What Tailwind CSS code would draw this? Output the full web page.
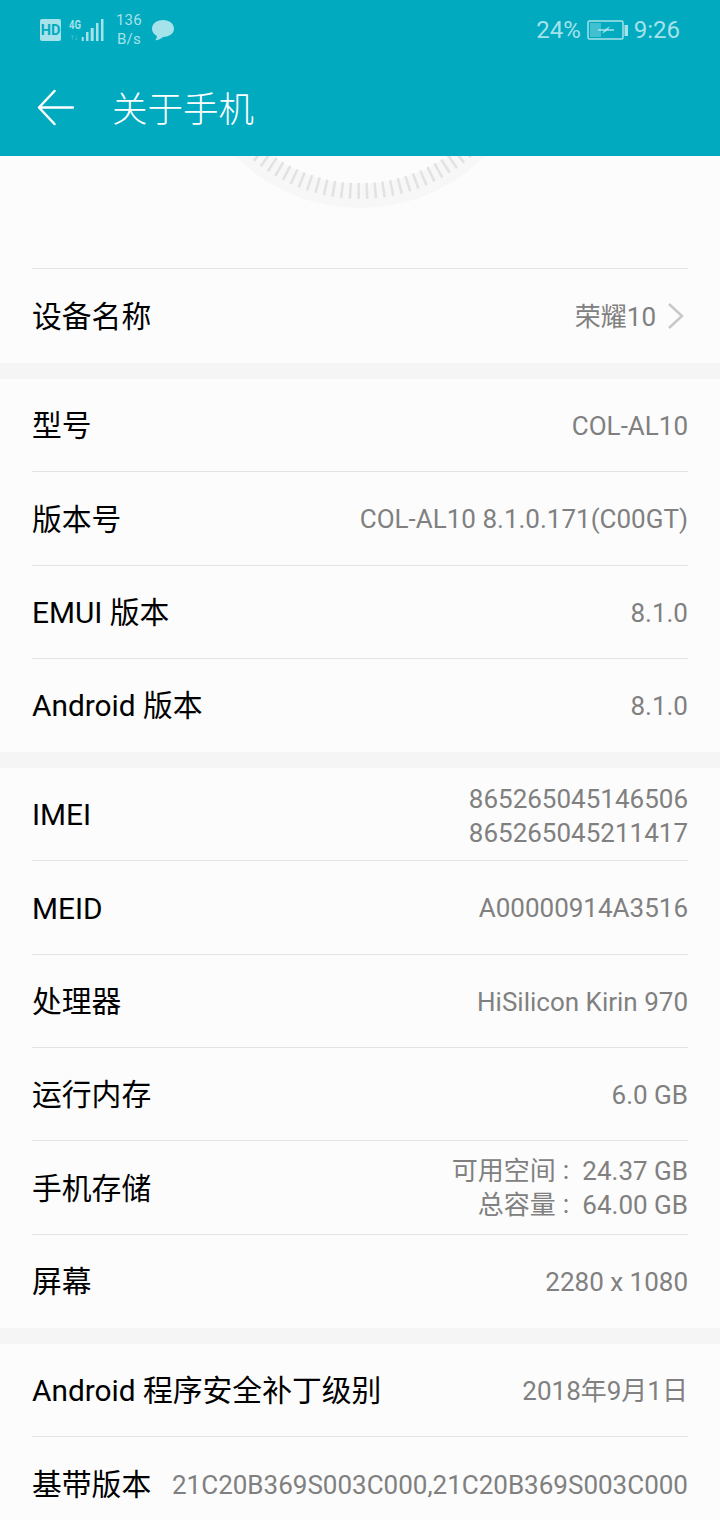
<!DOCTYPE html>
<html>
<head>
<meta charset="utf-8">
<script src="https://cdn.jsdelivr.net/npm/@tailwindcss/browser@4"></script>
</head>
<body class="bg-[#fcfcfc] font-['Roboto','Noto_Sans_CJK_SC',sans-serif]">
<div class="w-[720px] h-[1520px] overflow-hidden flex flex-col">
  <header class="h-[156px] shrink-0 bg-[#02aabf] relative z-10">
    <div class="h-[60px] flex items-center justify-between pl-[40px] pr-[40px] text-[#a5e2ea]">
      <div class="flex items-center">
        <svg width="22" height="22" viewBox="0 0 22 22"><rect x="0" y="0" width="21" height="22" rx="2" fill="#a5e2ea"/><text x="10.500" y="16" text-anchor="middle" font-family="Roboto" font-weight="700" font-size="14.500" fill="#02aabf">HD</text></svg>
        <svg class="ml-[6px]" width="38" height="26" viewBox="0 0 38 26"><text x="1" y="12" font-family="Roboto" font-weight="700" font-size="13" fill="#a5e2ea" textLength="12" lengthAdjust="spacingAndGlyphs">4G</text><text x="2" y="23" font-size="8" font-family="Roboto" fill="#6ccbd9">↑↓</text><rect x="13.700" y="20" width="2" height="4" fill="#a5e2ea"/><rect x="18" y="15" width="2.500" height="9" fill="#a5e2ea"/><rect x="22.700" y="11" width="3" height="13" fill="#a5e2ea"/><rect x="28" y="6" width="2.500" height="18" fill="#a5e2ea"/><rect x="33" y="2" width="2.500" height="22" fill="#a5e2ea"/></svg>
        <div class="ml-[8px] w-[30px] flex flex-col items-center text-[15px] leading-[19px] tracking-[0.300px]"><span>136</span><span>B/s</span></div>
        <svg class="ml-[7px]" width="24" height="23" viewBox="0 0 24 23"><path d="M12 1C5.500 1 1 4.700 1 9.700c0 3.300 2 5.800 5 7.200-.2 1.700-.9 3.200-1.900 4.400 3-.3 6-1.700 8-3.400 6.200-.1 10.900-3.500 10.900-8.200C23 4.700 18.500 1 12 1z" fill="#a5e2ea"/></svg>
      </div>
      <div class="flex items-center text-[24px]">
        <span>24%</span>
        <svg class="ml-[6px]" width="41" height="20" viewBox="0 0 41 20"><rect x="1" y="1" width="35" height="18" rx="1.500" fill="none" stroke="#a5e2ea" stroke-width="1.500"/><rect x="3" y="3" width="11" height="14" fill="#a5e2ea" fill-opacity="0.400"/><path d="M11 9.300h7l5-3-2 3h6v1.500h-7l-5 3 2-3h-6z" fill="#a5e2ea"/><rect x="37.500" y="5" width="3.500" height="11" fill="#a5e2ea"/></svg>
        <span class="ml-[6px]">9:26</span>
      </div>
    </div>
    <div class="h-[96px] flex items-center pl-[36px] -mt-[1px]">
      <svg class="relative top-[1px]" width="38" height="38" viewBox="0 0 38 38" fill="none" stroke="#ffffff" stroke-width="2.500" stroke-linecap="round" stroke-linejoin="round"><path d="M37 18.500H3M18.500 2L3 18.500 18.500 35"/></svg>
      <span class="ml-[38px] text-[35.500px] text-white font-light relative top-[4px]">关于手机</span>
    </div>
  </header>

  <section class="h-[207px] shrink-0 flex flex-col justify-end relative overflow-hidden">
    <svg class="absolute left-[170px] top-[-314px]" width="380" height="380" viewBox="0 0 380 380" fill="none">
      <circle cx="190" cy="190" r="164" stroke="#f7f7f7" stroke-width="24"/>
      <circle cx="190" cy="190" r="159" stroke="#e2e2e2" stroke-width="16" stroke-dasharray="2.500 5.826"/>
    </svg>
    <div class="mx-[32px] h-[95px] border-t border-[#e4e4e4] flex items-center justify-between relative">
      <span class="relative top-[1px] text-[29.800px] text-black">设备名称</span>
      <div class="flex items-center text-[26px] text-[#808080] pr-[3px]">
        <span class="relative top-[1px]">荣耀10</span>
        <svg class="ml-[11px]" width="18" height="26" viewBox="0 0 18 26" fill="none" stroke="#c8c8c8" stroke-width="2.500"><path d="M2 1l13 12L2 25"/></svg>
      </div>
    </div>
  </section>

  <div class="h-[16px] shrink-0 bg-[#f5f5f5]"></div>

  <section class="px-[32px] shrink-0">
    <div class="h-[93px] border-b border-[#e4e4e4] flex items-center justify-between"><span class="relative top-[1px] text-[29.800px] text-black">型号</span><span class="relative top-[1px] text-[26px] text-[#808080]">COL-AL10</span></div>
    <div class="h-[94px] border-b border-[#e4e4e4] flex items-center justify-between"><span class="relative top-[2px] text-[29.800px] text-black">版本号</span><span class="relative top-[1px] text-[26px] text-[#808080]">COL-AL10 8.1.0.171(C00GT)</span></div>
    <div class="h-[93px] border-b border-[#e4e4e4] flex items-center justify-between"><span class="relative top-[1px] text-[29.800px] text-black">EMUI 版本</span><span class="relative top-[1px] text-[26px] text-[#808080]">8.1.0</span></div>
    <div class="h-[93px] flex items-center justify-between"><span class="relative top-[1px] text-[29.800px] text-black">Android 版本</span><span class="relative top-[1px] text-[26px] text-[#808080]">8.1.0</span></div>
  </section>

  <div class="h-[16px] shrink-0 bg-[#f5f5f5]"></div>

  <section class="px-[32px] shrink-0">
    <div class="h-[93px] border-b border-[#e4e4e4] flex items-center justify-between"><span class="relative top-[1px] text-[29.800px] text-black">IMEI</span><span class="relative top-[2px] text-[26px] leading-[34px] text-[#808080] text-right">865265045146506<br>865265045211417</span></div>
    <div class="h-[94px] border-b border-[#e4e4e4] flex items-center justify-between"><span class="relative top-[2px] text-[29.800px] text-black">MEID</span><span class="relative top-[1px] text-[26px] text-[#808080]">A00000914A3516</span></div>
    <div class="h-[93px] border-b border-[#e4e4e4] flex items-center justify-between"><span class="relative top-[1px] text-[29.800px] text-black">处理器</span><span class="relative top-[1px] text-[26px] text-[#808080]">HiSilicon Kirin 970</span></div>
    <div class="h-[93px] border-b border-[#e4e4e4] flex items-center justify-between"><span class="relative top-[1px] text-[29.800px] text-black">运行内存</span><span class="relative top-[1px] text-[26px] text-[#808080]">6.0 GB</span></div>
    <div class="h-[94px] border-b border-[#e4e4e4] flex items-center justify-between"><span class="relative top-[2px] text-[29.800px] text-black">手机存储</span><div class="text-[26px] text-[#808080] text-right"><div class="h-[34px] leading-[34px]">可用空间<span class="text-[20px] font-['Noto_Sans_CJK_TC']">：</span> 24.37 GB</div><div class="h-[34px] leading-[34px]">总容量<span class="text-[20px] font-['Noto_Sans_CJK_TC']">：</span> 64.00 GB</div></div></div>
    <div class="h-[93px] flex items-center justify-between"><span class="relative top-[1px] text-[29.800px] text-black">屏幕</span><span class="relative top-[1px] text-[26px] text-[#808080]">2280 x 1080</span></div>
  </section>

  <div class="h-[16px] shrink-0 bg-[#f5f5f5]"></div>

  <section class="px-[32px] shrink-0">
    <div class="h-[93px] border-b border-[#e4e4e4] flex items-center justify-between"><span class="relative top-[1px] text-[29.800px] text-black">Android 程序安全补丁级别</span><span class="relative top-[1px] text-[26px] text-[#808080]">2018年9月1日</span></div>
    <div class="h-[93px] pt-[1px] flex items-center justify-between"><span class="relative top-[1px] text-[29.800px] text-black">基带版本</span><span class="relative top-[1px] text-[26px] text-[#808080]">21C20B369S003C000,21C20B369S003C000</span></div>
  </section>
</div>
</body>
</html>
